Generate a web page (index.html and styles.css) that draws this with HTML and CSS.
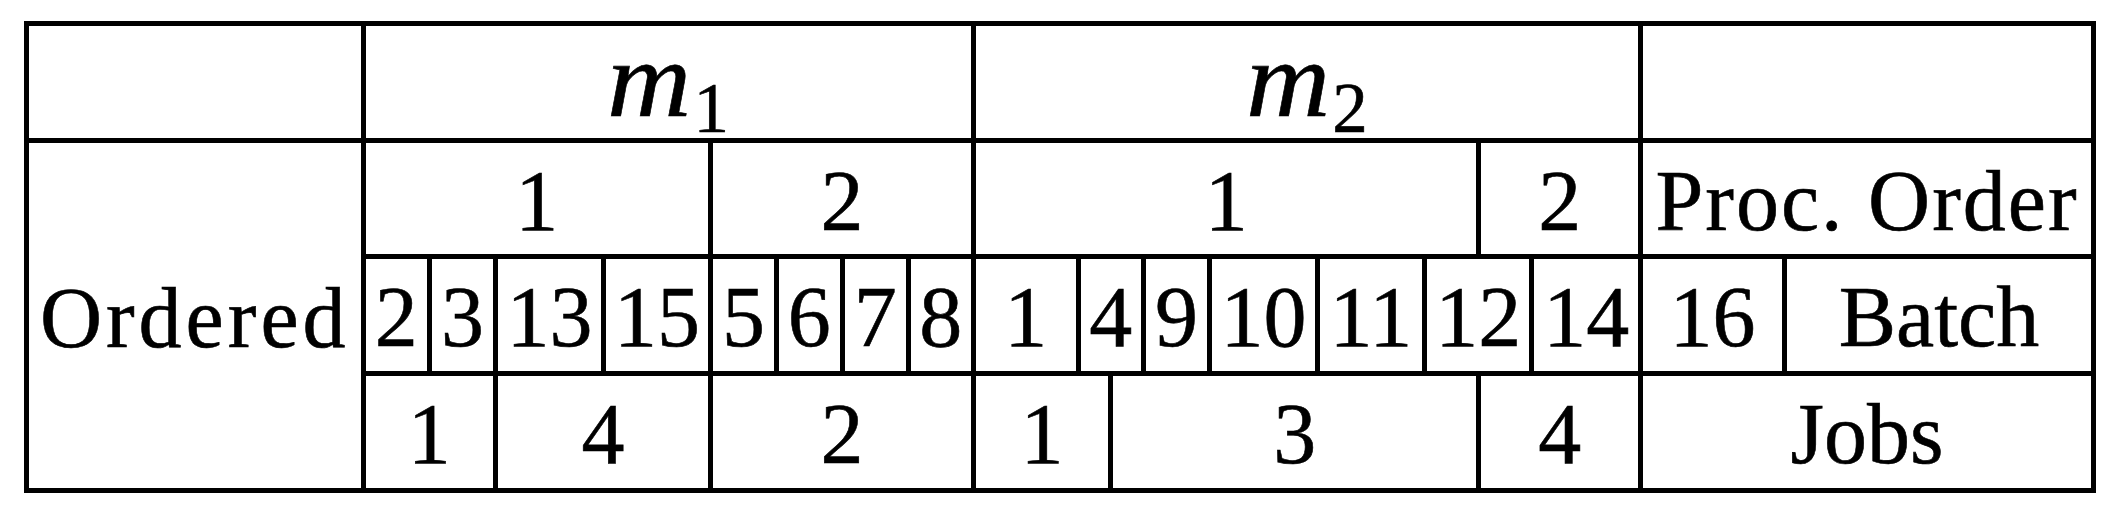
FILE: index.html
```html
<!DOCTYPE html>
<html lang="en">
<head>
<meta charset="utf-8">
<title>Batch order table</title>
<link rel="stylesheet" href="styles.css">
</head>
<body>
<div class="page">
  <div class="grid">
    <!-- row 1 -->
    <div class="cell"></div>
    <div class="cell s8 head"><span class="math"><i>m</i><span class="sub">1</span></span></div>
    <div class="cell s9 head"><span class="math"><i>m</i><span class="sub">2</span></span></div>
    <div class="cell s2"></div>
    <!-- label spanning rows 2-4 -->
    <div class="cell ordered"><span class="word wide">Ordered</span></div>
    <!-- row 2 -->
    <div class="cell s4">1</div>
    <div class="cell s4">2</div>
    <div class="cell s7">1</div>
    <div class="cell s2">2</div>
    <div class="cell s2"><span class="word mid">Proc. Order</span></div>
    <!-- row 3 -->
    <div class="cell">2</div>
    <div class="cell">3</div>
    <div class="cell">13</div>
    <div class="cell">15</div>
    <div class="cell">5</div>
    <div class="cell">6</div>
    <div class="cell">7</div>
    <div class="cell">8</div>
    <div class="cell">1</div>
    <div class="cell s2">4</div>
    <div class="cell">9</div>
    <div class="cell">10</div>
    <div class="cell">11</div>
    <div class="cell s2">12</div>
    <div class="cell">14</div>
    <div class="cell">16</div>
    <div class="cell">Batch</div>
    <!-- row 4 -->
    <div class="cell s2">1</div>
    <div class="cell s2">4</div>
    <div class="cell s4">2</div>
    <div class="cell s2">1</div>
    <div class="cell s5">3</div>
    <div class="cell s2">4</div>
    <div class="cell s2">Jobs</div>
  </div>
</div>
</body>
</html>
```

FILE: styles.css
```css
html, body {
  margin: 0;
  background: #ffffff;
}

.page {
  padding: 21px 0 0 24px;
}

.grid {
  display: inline-grid;
  grid-template-columns:
    331.5px 61.5px 61px 103px 102px 61px 60.5px 61.3px 60px 100px
    27.2px 27.8px 61.4px 102.6px 102.2px 49.5px 48px 103.7px 138.8px 304px;
  grid-template-rows: 112px 111px 111.5px 112.5px;
  gap: 5px;
  padding: 5px;
  background: #000000;
  font-family: "Liberation Serif", "Times New Roman", serif;
  font-size: 86px;
  color: #000000;
  -webkit-text-stroke: 0.6px #000000;
}

.cell {
  background: #ffffff;
  display: flex;
  align-items: center;
  justify-content: center;
  line-height: 1;
  padding-top: 5px;
  white-space: nowrap;
  box-sizing: border-box;
}

.s2 { grid-column: span 2; }
.s4 { grid-column: span 4; }
.s5 { grid-column: span 5; }
.s7 { grid-column: span 7; }
.s8 { grid-column: span 8; }
.s9 { grid-column: span 9; }

.ordered {
  grid-column: 1;
  grid-row: 2 / 5;
}

.word.wide { letter-spacing: 4px; }
.word.mid { letter-spacing: 2px; }

.head {
  padding-top: 0;
  align-items: flex-start;
}

.math {
  font-size: 108px;
  line-height: 1;
  margin-top: 0;
}

.math i {
  font-style: italic;
  display: inline-block;
  transform: scaleX(1.08);
  margin: 0 3px;
}

.sub {
  font-size: 71px;
  line-height: 0;
  position: relative;
  top: 16px;
  margin-left: 2px;
}
```
